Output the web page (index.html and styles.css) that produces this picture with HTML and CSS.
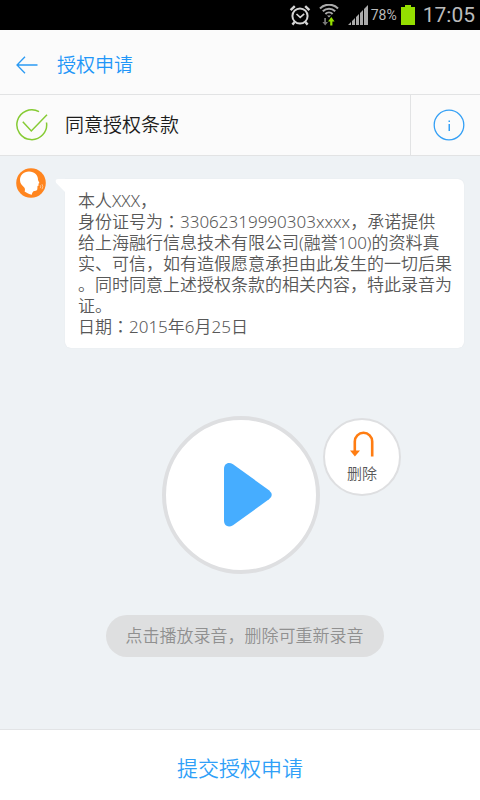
FILE: index.html
```html
<!DOCTYPE html>
<html lang="zh-CN">
<head>
<meta charset="utf-8">
<meta name="viewport" content="width=device-width, initial-scale=1">
<title>授权申请</title>
<link rel="stylesheet" href="styles.css">
</head>
<body>
<div class="status">
  <svg width="22" height="22" viewBox="0 0 22 22" fill="none" stroke="#d4d4d4" stroke-width="2" aria-hidden="true">
    <circle cx="11" cy="12" r="7.6"/>
    <path d="M7.500 10l3.700 3.400 4-3.600" stroke-width="1.600"/>
    <path d="M1.600 6.200l4.200-4M20.400 6.200l-4.200-4M5.600 18l-2.200 2.600M16.400 18l2.200 2.600" stroke-width="2.400"/>
  </svg>
  <svg class="wifi" width="20" height="22" viewBox="0 0 20 22" fill="none" stroke="#aaa" stroke-width="2" aria-hidden="true">
    <path d="M1 4.500a12.500 12.500 0 0 1 18 0M3.800 7.300a8.800 8.800 0 0 1 12.400 0M6.400 10a5.200 5.200 0 0 1 7.200 0"/>
    <path d="M8 11.500h4l-2 2z" fill="#aaa" stroke="none"/>
    <path d="M5.200 14h1.800v4H9l-2.800 3.500L3.400 18h1.800z" fill="#777" stroke="none"/>
    <path d="M11.200 21.500v-4H9l3.300-4.500 3.300 4.500h-2.200v4z" fill="#94e000" stroke="none"/>
  </svg>
  <svg class="signal" width="20" height="22" viewBox="0 0 20 22" fill="#aaa" aria-hidden="true">
    <path d="M0 21l3-3v3zM4 17l3-3v7H4zM8 13l3-3v11H8zM12 9l3-3v15h-3zM16 5l4-4v20h-4z"/>
  </svg>
  <span class="percent">78%</span>
  <svg class="battery" width="14" height="22" viewBox="0 0 14 22" fill="#94de00" aria-hidden="true">
    <path d="M4 1h6v2h4v18H0V3h4z"/>
  </svg>
  <span class="clock">17:05</span>
</div>

<header class="header">
  <a class="back" href="#" aria-label="返回">
    <svg width="22" height="18" viewBox="0 0 22 18" fill="none" stroke="#2b9af3" stroke-width="1.300" aria-hidden="true"><path d="M21.500 9H1M9 .800L1 9l8 8.200"/></svg>
  </a>
  <h1 class="title">授权申请</h1>
</header>

<div class="agree">
  <label class="agree-label">
    <span class="tick">
      <input class="tick-input" type="checkbox" checked>
      <svg width="32" height="32" viewBox="0 0 32 32" fill="none" stroke="#86cb34" stroke-width="1.500" aria-hidden="true"><path d="M23 2.700A14.900 14.900 0 1 0 30.500 13.500"/><path d="M6.800 12.800l8.500 9.200L31 5.700"/></svg>
    </span>
    <span class="agree-text">同意授权条款</span>
  </label>
  <button class="info" type="button" aria-label="条款说明">
    <svg width="32" height="32" viewBox="0 0 32 32" aria-hidden="true"><circle cx="16" cy="16" r="14.800" fill="none" stroke="#35a0f5" stroke-width="1.300"/><path d="M15.500 11.500h1.500v1.500h-1.500zM15.500 15h1.500v7h-1.500z" fill="#35a0f5"/></svg>
  </button>
</div>

<main class="main">
  <div class="message">
    <svg class="avatar" width="30" height="30" viewBox="0 0 30 30" aria-hidden="true">
      <circle cx="15" cy="15" r="14.800" fill="#ff851f"/>
      <path d="M13 3.500C7.500 3.500 4 7.500 4 12c0 3.200 1.600 5 4 7.200 1 1 1.300 2.600.6 4.300 2.200 1.600 4.600 2.700 7.200 3.300.3-2.200 1.200-3.600 2.700-3.800 2.300-.2 2.900-.9 2.900-2.700l.1-2.200 1.200-.6-.3-1.800 1-.8-1.400-2.900C22.300 7.500 18.600 3.500 13 3.500z" fill="#fff"/>
      <path d="M24.200 17.200q1 1.500 0 3M26 16.200q1.700 2.500 0 5" fill="none" stroke="#ffd3ac" stroke-width=".800"/>
    </svg>
    <div class="bubble">
      <svg class="tail" width="12" height="18" viewBox="0 0 12 18" aria-hidden="true"><path d="M12 0H3Q-.500 0 1.200 4L10 13v5h2z" fill="#fff"/></svg>
      <p class="text">本人XXX，<br>
身份证号为<span class="colon" lang="ja">：</span>33062319990303xxxx，承诺提供<br>
给上海融行信息技术有限公司(融誉100)的资料真<br>
实、可信，如有造假愿意承担由此发生的一切后果<br>
。同时同意上述授权条款的相关内容，特此录音为<br>
证。<br>
日期<span class="colon" lang="ja">：</span>2015年6月25日</p>
    </div>
  </div>

  <div class="recorder">
    <button class="play" type="button" aria-label="播放录音">
      <svg width="50" height="66" viewBox="0 0 50 66" aria-hidden="true"><path d="M1 7C1 1.500 5.500-.500 10 2.300L46 28.200Q51.500 33 46 37.300L10 63.200C5.500 66 1 64 1 58.500z" fill="#46adff"/></svg>
    </button>
    <button class="delete" type="button">
      <svg width="24" height="26" viewBox="0 0 24 26" aria-hidden="true"><path d="M22.200 25.500V10.500a8.700 8.700 0 0 0-17.400 0V20" fill="none" stroke="#ff7d12" stroke-width="2.600"/><path d="M0 19.500h10L4.900 25.500z" fill="#ff7d12"/></svg>
      <span>删除</span>
    </button>
  </div>

  <p class="hint">点击播放录音，删除可重新录音</p>
</main>

<button class="submit" type="button">提交授权申请</button>
</body>
</html>
```

FILE: styles.css
```css
* {
  box-sizing: border-box;
}

body {
  margin: 0;
  min-height: 100vh;
  display: flex;
  flex-direction: column;
  background: #eef2f5;
  color: #585858;
  font-family: "Noto Sans", "Noto Sans CJK SC", sans-serif;
  font-weight: 350;
}

button {
  font: inherit;
  border: 0;
  padding: 0;
  cursor: pointer;
}

svg {
  display: block;
  flex: none;
}

.status {
  display: flex;
  align-items: center;
  justify-content: flex-end;
  height: 30px;
  padding-right: 5px;
  background: #000;
  color: #bbb;
  font-family: Roboto, sans-serif;
  font-weight: 400;
}

.wifi {
  margin-left: 8px;
}

.signal {
  margin-left: 9px;
}

.percent {
  margin-left: 3px;
  font-size: 14px;
}

.battery {
  margin-left: 4px;
}

.clock {
  margin-left: 8px;
  font-size: 21px;
}

.header {
  display: flex;
  align-items: center;
  height: 65px;
  padding: 5px 16px 0;
  gap: 19px;
  background: #fbfbfb;
  border-bottom: 1px solid #e2e3e4;
}

.title {
  margin: 0;
  color: #2196f8;
  font-size: 19px;
  line-height: 28px;
  font-weight: 350;
}

.agree {
  display: flex;
  height: 61px;
  background: #fbfbfb;
  border-bottom: 1px solid #e2e3e4;
}

.agree-label {
  flex: 1;
  display: flex;
  align-items: center;
  gap: 17px;
  padding-left: 16px;
}

.tick {
  position: relative;
}

.tick-input {
  position: absolute;
  inset: 0;
  width: 100%;
  height: 100%;
  margin: 0;
  opacity: 0;
}

.agree-text {
  color: #1c1c1c;
  font-size: 19px;
  line-height: 28px;
}

.info {
  display: flex;
  align-items: center;
  justify-content: center;
  width: 70px;
  padding-left: 6px;
  background: none;
  border-left: 1px solid #e2e3e4;
}

.main {
  flex: 1;
  display: flex;
  flex-direction: column;
  align-items: center;
}

.message {
  align-self: stretch;
  display: flex;
  align-items: flex-start;
  gap: 19px;
  padding: 12px 16px 0;
}

.bubble {
  position: relative;
  flex: 1;
  margin-top: 11px;
  padding: 11px 0 11px 13px;
  background: #fff;
  border-radius: 0 6px 6px 6px;
  box-shadow: 0 0 1px #d9dee2;
}

.tail {
  position: absolute;
  top: 0;
  left: -10px;
}

.text {
  margin: 0;
  font-size: 17px;
  line-height: 21px;
  white-space: nowrap;
}

.colon {
  font-family: "Noto Sans CJK JP", sans-serif;
  line-height: 1;
}

.recorder {
  align-self: stretch;
  display: grid;
  grid-template-columns: 1fr auto 1fr;
  align-items: start;
  column-gap: 3px;
  margin-top: 68px;
  padding-left: 2px;
}

.play {
  grid-column: 2;
  display: flex;
  align-items: center;
  justify-content: center;
  width: 158px;
  height: 158px;
  padding-left: 14px;
  background: #fff;
  border: 4px solid #dedfe1;
  border-radius: 50%;
}

.delete {
  display: flex;
  flex-direction: column;
  align-items: center;
  justify-content: center;
  gap: 6px;
  width: 78px;
  height: 78px;
  margin-top: 2px;
  background: #fff;
  border: 2px solid #dedfe1;
  border-radius: 50%;
  color: #585858;
  font-size: 15px;
  line-height: 20px;
}

.hint {
  margin: 41px 0 0 9px;
  padding: 0 20px;
  border-radius: 21px;
  background: #dedfe0;
  color: #909090;
  font-size: 17px;
  line-height: 42px;
}

.submit {
  height: 71px;
  padding-top: 3px;
  background: #fff;
  border-top: 1px solid #e2e4e6;
  color: #2f9ff8;
  font-size: 21px;
}
```
